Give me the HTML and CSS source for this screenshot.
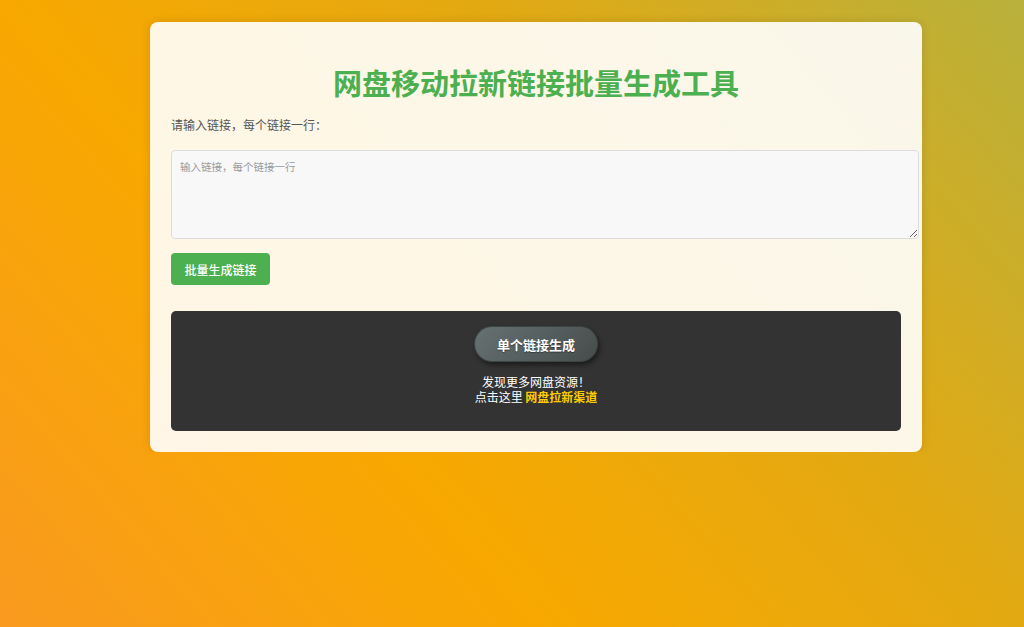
FILE: index.html
```html
<!DOCTYPE html>
<html lang="zh-CN">
<head>
<meta charset="utf-8">
<title>网盘移动拉新链接批量生成工具</title>
<link rel="stylesheet" href="styles.css">
</head>
<body>
<div class="card">
  <h1 class="title">网盘移动拉新链接批量生成工具</h1>
  <label class="label" for="links">请输入链接，每个链接一行：</label>
  <textarea id="links" class="links" placeholder="输入链接，每个链接一行"></textarea>
  <button class="gen-btn" type="button">批量生成链接</button>
  <div class="promo">
    <button class="single-btn" type="button">单个链接生成</button>
    <p class="promo-text">发现更多网盘资源！<br>点击这里 <a class="promo-link" href="#">网盘拉新渠道</a></p>
  </div>
</div>
</body>
</html>
```

FILE: styles.css
```css
html {
  height: 100%;
  background: linear-gradient(49deg, #f99a1f 0%, #f8a800 35%, #e3a912 65%, #b8b13c 100%);
}
body {
  margin: 0;
  padding: 22px 0 0 150px;
  font-family: "Noto Sans CJK SC", "Noto Sans", sans-serif;
}
.card {
  box-sizing: border-box;
  width: 772px;
  padding: 21px;
  background: rgba(255, 255, 255, 0.9);
  border-radius: 8px;
  box-shadow: 0 0 10px rgba(0, 0, 0, 0.12);
}
.title {
  margin: 20px 0 15px;
  font-size: 29px;
  line-height: 38px;
  font-weight: 700;
  color: #4caf50;
  text-align: center;
}
.label {
  display: block;
  font-size: 12px;
  line-height: 17px;
  color: #555;
  margin-bottom: 17px;
}
.links {
  display: block;
  width: 730px;
  height: 71px;
  padding: 8px;
  margin: 0;
  border: 1px solid #ddd;
  border-radius: 4px;
  background: #f8f8f8;
  font-family: "Noto Sans CJK SC", "Noto Sans", sans-serif;
  font-size: 10.5px;
  line-height: 15px;
  color: #333;
}
.links::placeholder {
  color: #999;
}
.gen-btn {
  display: block;
  margin: 14px 0 26px;
  height: 32px;
  width: 99px;
  padding: 0;
  border: none;
  border-radius: 4px;
  background: #4caf50;
  color: #fff;
  font-family: "Noto Sans CJK SC", "Noto Sans", sans-serif;
  font-size: 12px;
  font-weight: 500;
}
.promo {
  height: 120px;
  box-sizing: border-box;
  padding-top: 15px;
  background: #333;
  border-radius: 5px;
  display: flex;
  flex-direction: column;
  align-items: center;
}
.single-btn {
  width: 124px;
  height: 36px;
  padding: 0;
  border: 1px solid #3e4444;
  border-radius: 18px;
  background: linear-gradient(135deg, #667171 0%, #545d5d 55%, #464c4c 100%);
  box-shadow: 2px 3px 5px rgba(0, 0, 0, 0.45);
  color: #fff;
  font-family: "Noto Sans CJK SC", "Noto Sans", sans-serif;
  font-size: 13px;
  font-weight: 700;
  text-shadow: 0 1px 1px rgba(0, 0, 0, 0.4);
}
.promo-text {
  margin: 12px 0 0;
  font-size: 12px;
  line-height: 15px;
  color: #fff;
  text-align: center;
}
.promo-link {
  color: #ffcc00;
  font-weight: 700;
  text-decoration: none;
}
```
